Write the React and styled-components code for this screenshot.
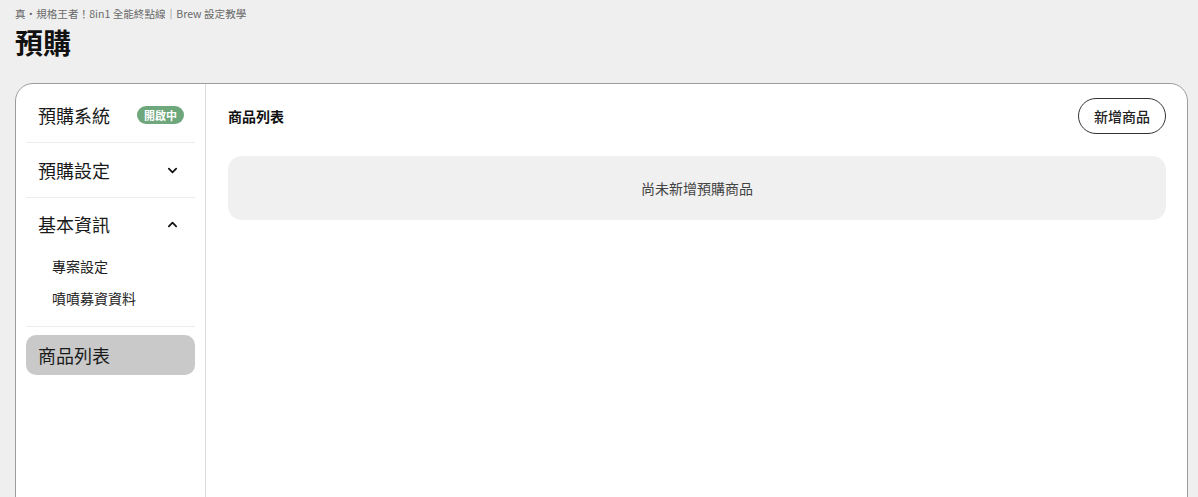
import React from "react";
import styled, { createGlobalStyle } from "styled-components";

const Global = createGlobalStyle`
  html, body { margin: 0; padding: 0; background: #efefef; }
  body { font-family: "Noto Sans CJK TC", "Noto Sans", sans-serif; color: #1a1a1a; overflow: hidden; }
`;

const Page = styled.div`
  padding: 5px 10px 0 15px;
  height: 497px;
  box-sizing: border-box;
  display: flex;
  flex-direction: column;
`;

const Breadcrumb = styled.div`
  font-size: 10.6px;
  line-height: 18px;
  color: #6a6a6a;
`;

const Title = styled.h1`
  margin: 0;
  font-size: 28px;
  line-height: 38px;
  font-weight: 700;
  color: #111;
`;

const Card = styled.div`
  margin-top: 22px;
  flex: 1;
  min-height: 440px;
  background: #fff;
  border: 1px solid #9c9c9c;
  border-radius: 18px;
  display: flex;
  overflow: hidden;
`;

const Sidebar = styled.nav`
  width: 169px;
  flex: none;
  padding: 4px 10px;
  border-right: 1px solid #dcdcdc;
  display: flex;
  flex-direction: column;
`;

const Row = styled.div`
  height: 54px;
  padding: 0 17px 0 12px;
  display: flex;
  align-items: center;
  justify-content: space-between;
  border-bottom: 1px solid #ececec;
  font-size: 18px;
  color: #1a1a1a;
`;

const Group = styled.div`
  border-bottom: 1px solid #ececec;
  padding-bottom: 12px;
`;

const GroupHead = styled(Row)`
  height: 52px;
  border-bottom: none;
`;

const SubItem = styled.div`
  height: 32px;
  display: flex;
  align-items: center;
  padding-left: 26px;
  font-size: 14px;
  color: #222;
`;

const Active = styled(Row)`
  margin-top: 8px;
  height: 40px;
  border-bottom: none;
  border-radius: 10px;
  background: ${(p) => (p.$active ? "#c9c9c9" : "transparent")};
`;

const Badge = styled.span`
  display: inline-flex;
  align-items: center;
  justify-content: center;
  height: 18px;
  padding: 0 7px;
  border-radius: 9px;
  background: #6ea77c;
  color: #fff;
  font-size: 11px;
  font-weight: 700;
  margin-right: -6px;
`;

const Main = styled.main`
  flex: 1;
  padding: 14px 21px 0 22px;
  display: flex;
  flex-direction: column;
  gap: 22px;
`;

const Header = styled.div`
  display: flex;
  align-items: center;
  justify-content: space-between;
`;

const SectionTitle = styled.h2`
  margin: 0;
  font-size: 14px;
  font-weight: 700;
  color: #111;
`;

const Button = styled.button`
  height: 36px;
  padding: 0 15px;
  border: 1px solid #333;
  border-radius: 18px;
  background: #fff;
  font-family: inherit;
  font-size: 14px;
  font-weight: 500;
  color: #222;
  cursor: pointer;
`;

const Empty = styled.div`
  height: 64px;
  border-radius: 14px;
  background: #f0f0f0;
  display: flex;
  align-items: center;
  justify-content: center;
  font-size: 14px;
  color: #444;
`;

const Chevron = ({ up }) => (
  <svg width="11" height="11" viewBox="0 0 12 12" fill="none">
    <path
      d={up ? "M2 8 L6 4 L10 8" : "M2 4 L6 8 L10 4"}
      stroke="#111"
      strokeWidth="1.9"
      strokeLinecap="round"
      strokeLinejoin="round"
    />
  </svg>
);

export default function App() {
  return (
    <>
      <Global />
      <Page>
        <Breadcrumb>真・規格王者！8in1 全能終點線｜Brew 設定教學</Breadcrumb>
        <Title>預購</Title>
        <Card>
          <Sidebar>
            <Row>
              預購系統
              <Badge>開啟中</Badge>
            </Row>
            <Row>
              預購設定
              <Chevron />
            </Row>
            <Group>
              <GroupHead>
                基本資訊
                <Chevron up />
              </GroupHead>
              <SubItem>專案設定</SubItem>
              <SubItem>噴噴募資資料</SubItem>
            </Group>
            <Active $active>商品列表</Active>
          </Sidebar>
          <Main>
            <Header>
              <SectionTitle>商品列表</SectionTitle>
              <Button>新增商品</Button>
            </Header>
            <Empty>尚未新增預購商品</Empty>
          </Main>
        </Card>
      </Page>
    </>
  );
}
